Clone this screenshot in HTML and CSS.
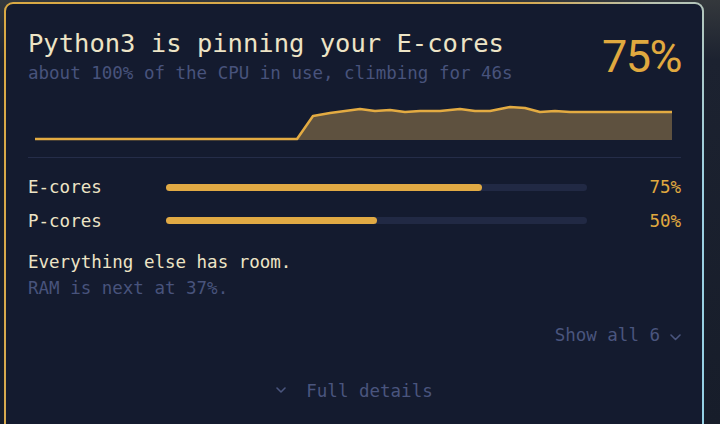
FILE: index.html
```html
<!DOCTYPE html>
<html lang="en">
<head>
    <meta charset="UTF-8">
    <meta name="viewport" content="width=device-width, initial-scale=1.0">
    <title>CPU pressure</title>
    <link rel="stylesheet" href="styles.css">
</head>
<body>

    <div class="card">
        <div class="header">
            <div class="headline">
                <h1>Python3 is pinning your E-cores</h1>
                <p class="sub">about 100% of the CPU in use, climbing for 46s</p>
            </div>
            <div class="big-value">75%</div>
        </div>

        <svg class="spark" width="653" height="42" viewBox="0 0 653 42">
            <path class="spark-fill" d="M269 38 L285 15 L302 12 L317 10 L332 8 L347 10 L362 9 L377 11 L392 10 L412 10 L432 8 L447 10 L462 10 L472 8 L482 6 L497 7 L512 11 L527 10 L542 11 L644 11 L644 39 L269 39 Z"/>
            <path class="spark-line" d="M7 38 L269 38 L285 15 L302 12 L317 10 L332 8 L347 10 L362 9 L377 11 L392 10 L412 10 L432 8 L447 10 L462 10 L472 8 L482 6 L497 7 L512 11 L527 10 L542 11 L644 11"/>
        </svg>

        <div class="cores">
            <div class="core-row">
                <span class="core-name">E-cores</span>
                <div class="track"><div class="fill" style="width: 75%"></div></div>
                <span class="core-value">75%</span>
            </div>
            <div class="core-row">
                <span class="core-name">P-cores</span>
                <div class="track"><div class="fill" style="width: 50%"></div></div>
                <span class="core-value">50%</span>
            </div>
        </div>

        <p class="note">Everything else has room.</p>
        <p class="note muted">RAM is next at 37%.</p>

        <div class="show-all">
            <span>Show all 6</span>
            <svg class="chev" width="11" height="7" viewBox="0 0 11 7"><path d="M1 1 L5.5 5.5 L10 1"/></svg>
        </div>

        <div class="details">
            <svg class="chev" width="10" height="7" viewBox="0 0 10 7"><path d="M1 1 L5 5 L9 1"/></svg>
            <span>Full details</span>
        </div>
    </div>

</body>
</html>
```

FILE: styles.css
```css
body {
    margin: 0;
    height: 424px;
    overflow: hidden;
    background: linear-gradient(to bottom, #34383c 0px, #1c2230 60px, #171d2a 100%);
    font-family: "DejaVu Sans Mono", "Liberation Mono", monospace;
}

.card {
    width: 653px;
    height: 520px;
    margin: 2px 0 0 4px;
    padding: 23px 21px 0 22px;
    border: 2px solid transparent;
    border-radius: 9px;
    background:
        linear-gradient(#141b2f, #141b2f) padding-box,
        linear-gradient(135deg, #d9a944 0%, #d6aa52 42%, #b9c2b0 52%, #9ed0e0 70%, #8fd0e6 100%) border-box;
}

.header {
    display: flex;
    justify-content: space-between;
    align-items: flex-start;
}

h1 {
    margin: 0;
    font-size: 25.5px;
    line-height: 32px;
    font-weight: normal;
    color: #ede4c6;
}

.sub {
    margin: 3px 0 0;
    font-size: 17.5px;
    line-height: 22px;
    color: #48537c;
}

.big-value {
    font-family: Roboto, "Noto Sans", sans-serif;
    font-size: 45px;
    line-height: 56px;
    margin-top: 2px;
    letter-spacing: -1.5px;
    color: #e0a93f;
}

.spark {
    display: block;
    margin-top: 16px;
}

.spark-fill {
    fill: #5e513f;
}

.spark-line {
    fill: none;
    stroke: #e3ab42;
    stroke-width: 2.5;
    stroke-linejoin: round;
}

.cores {
    margin-top: 14px;
    padding-top: 18px;
    border-top: 1.5px solid #252d49;
    display: flex;
    flex-direction: column;
    gap: 11.5px;
}

.core-row {
    display: flex;
    align-items: center;
    height: 22px;
    font-size: 17.5px;
}

.core-name {
    width: 138px;
    color: #ede4c6;
}

.track {
    width: 421px;
    height: 7px;
    border-radius: 4px;
    background-color: #212944;
}

.fill {
    height: 100%;
    border-radius: 4px;
    background-color: #e1aa44;
}

.core-value {
    flex: 1;
    text-align: right;
    color: #e0a93f;
}

.note {
    margin: 0;
    font-size: 17.5px;
    line-height: 26px;
    color: #ede4c6;
}

.cores + .note {
    margin-top: 17px;
}

.note.muted {
    color: #48537c;
}

.show-all {
    display: flex;
    justify-content: flex-end;
    align-items: center;
    gap: 10px;
    margin-top: 23px;
    font-size: 17.5px;
    line-height: 22px;
    color: #4a557e;
}

.details {
    display: flex;
    justify-content: center;
    align-items: center;
    gap: 20px;
    margin-top: 34px;
    font-size: 17.5px;
    line-height: 22px;
    color: #4a557e;
}

.chev path {
    fill: none;
    stroke: #4a557e;
    stroke-width: 1.6;
    stroke-linecap: round;
    stroke-linejoin: round;
}

.show-all .chev {
    margin-top: 6px;
}
```
